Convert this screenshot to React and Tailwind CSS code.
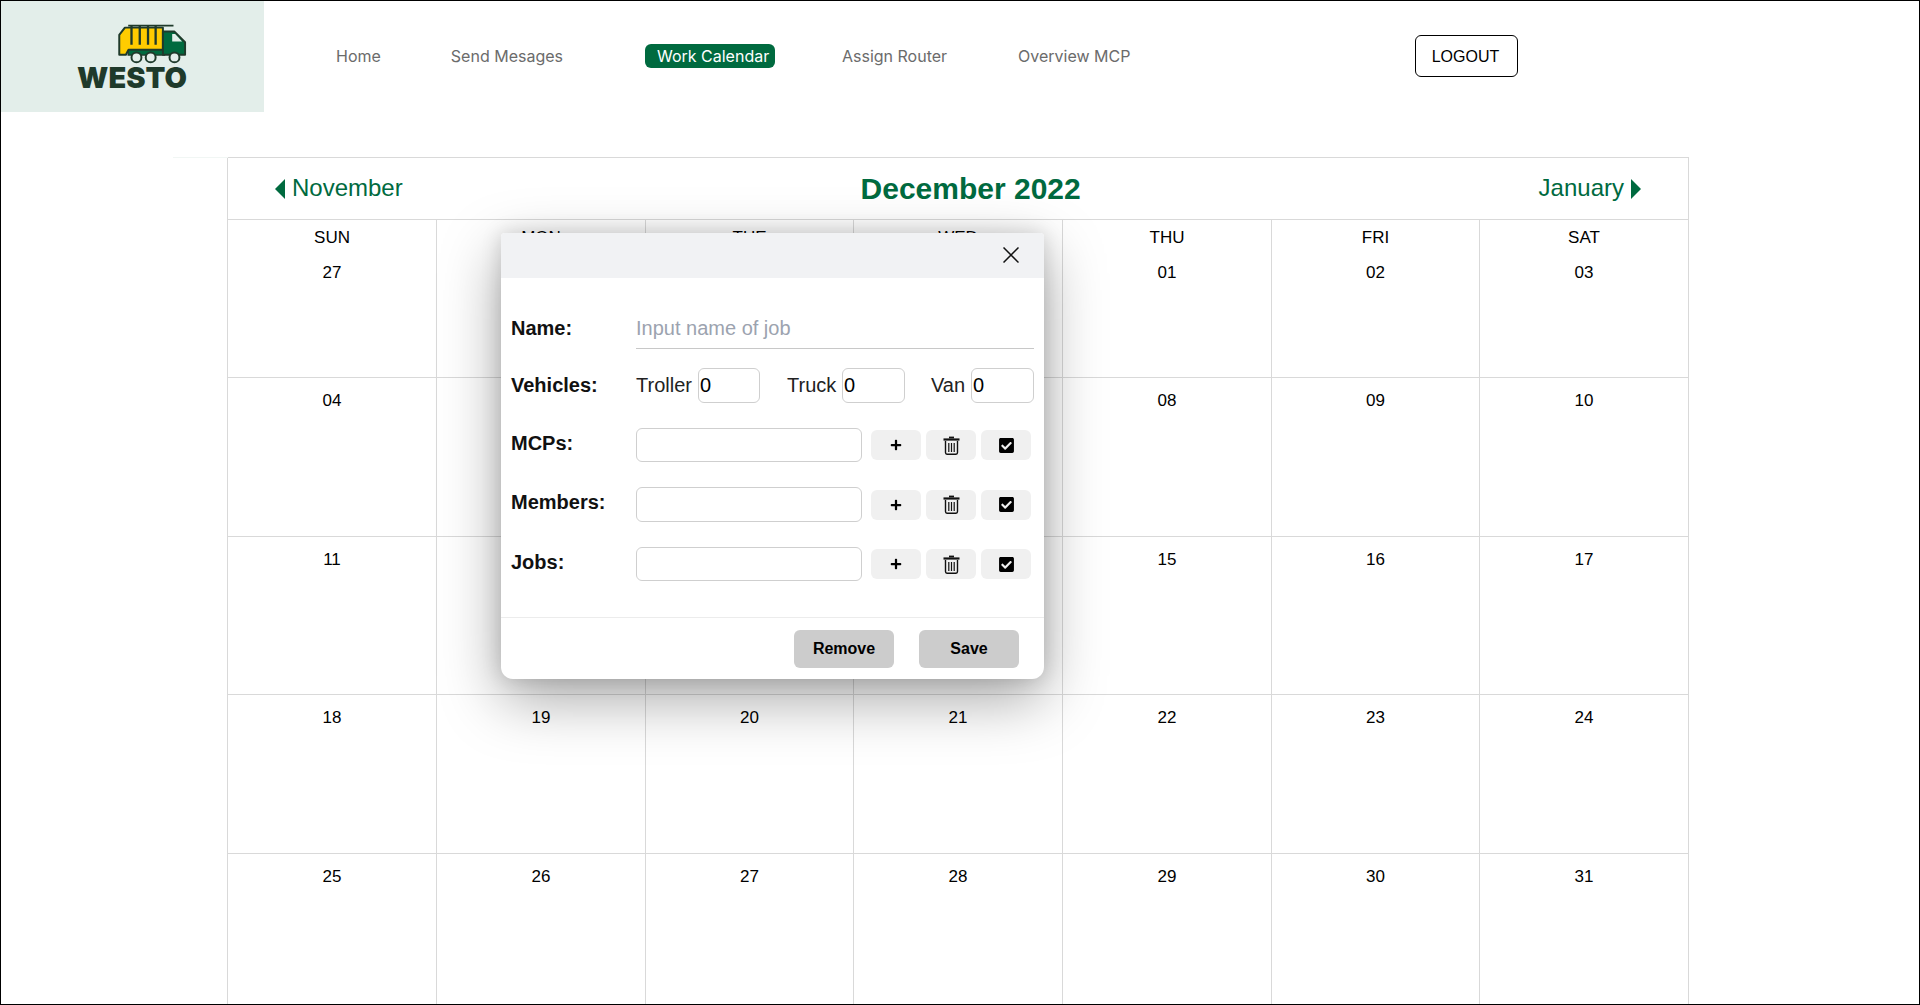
import { FaPlus, FaCheckSquare } from "react-icons/fa";

const WEEKS = [
  ["27", "28", "29", "30", "01", "02", "03"],
  ["04", "05", "06", "07", "08", "09", "10"],
  ["11", "12", "13", "14", "15", "16", "17"],
  ["18", "19", "20", "21", "22", "23", "24"],
  ["25", "26", "27", "28", "29", "30", "31"],
];
const DAYS = ["SUN", "MON", "TUE", "WED", "THU", "FRI", "SAT"];
const ROW_HEIGHTS = ["h-[158px]", "h-[159px]", "h-[158px]", "h-[159px]", "h-[160px]"];

function TruckLogo() {
  return (
    <svg viewBox="352 64 210 124" className="w-[70px] h-[41px] block">
      <path d="M385 72H522" stroke="#1f3a2b" strokeWidth="5" fill="none" />
      <rect x="385" y="143" width="110" height="18" fill="#006a3f" stroke="#1f3a2b" strokeWidth="4" />
      <path d="M375 78H490V145H386L378 160H358V100Z" fill="#ffcc00" stroke="#1f3a2b" strokeWidth="6" strokeLinejoin="round" />
      <path d="M395 70V130M420 70V130M445 70V130M468 70V130" stroke="#1f3a2b" strokeWidth="7" fill="none" />
      <path d="M490 90H525L557 122V160H490Z" fill="#006a3f" stroke="#1f3a2b" strokeWidth="6" strokeLinejoin="round" />
      <path d="M518 97H527L548 120H518Z" fill="#e3eeea" />
      <circle cx="410" cy="168" r="15" fill="#e3eeea" stroke="#1f3a2b" strokeWidth="6" />
      <circle cx="453" cy="168" r="15" fill="#e3eeea" stroke="#1f3a2b" strokeWidth="6" />
      <circle cx="525" cy="168" r="15" fill="#e3eeea" stroke="#1f3a2b" strokeWidth="6" />
    </svg>
  );
}

function Caret({ right }) {
  return (
    <svg viewBox="0 0 10 20" className="w-[10px] h-[20px]">
      <polygon points={right ? "0,0 10,10 0,20" : "10,0 0,10 10,20"} fill="#006a3f" />
    </svg>
  );
}

function TrashIcon() {
  return (
    <svg viewBox="0 0 17 19" className="w-[17px] h-[19px]" fill="none" stroke="#111" strokeWidth="1.4">
      <path d="M6 1.5H11" strokeWidth="1.8" />
      <path d="M0.5 3.5H16.5" strokeWidth="2.2" />
      <path d="M2.5 5V16.5C2.5 17.5 3.2 18.2 4 18.2H13C13.8 18.2 14.5 17.5 14.5 16.5V5" />
      <path d="M5.8 7V16M8.5 7V16M11.2 7V16" strokeWidth="1.2" />
    </svg>
  );
}

function ListRow({ label, inputH, labelClass }) {
  return (
    <div className="flex items-center mt-[25px]">
      <span className={`w-[125px] font-bold text-[20px] text-[#111] ${labelClass}`}>{label}</span>
      <input className={`w-[226px] ${inputH} border border-[#cfcfcf] rounded-md outline-none`} />
      <div className="flex gap-[5px] ml-[9px]">
        <button className="w-[50px] h-[30px] bg-[#f0f0f0] rounded-md flex items-center justify-center">
          <FaPlus className="text-[12px] text-black" />
        </button>
        <button className="w-[50px] h-[30px] bg-[#f0f0f0] rounded-md flex items-center justify-center">
          <TrashIcon />
        </button>
        <button className="w-[50px] h-[30px] bg-[#f0f0f0] rounded-md flex items-center justify-center">
          <FaCheckSquare className="text-[17px] text-black" />
        </button>
      </div>
    </div>
  );
}

function Modal() {
  return (
    <div className="absolute left-[500px] top-[232px] w-[543px] h-[446px] bg-white rounded-t-sm rounded-b-xl overflow-hidden shadow-[0_20px_60px_rgba(0,0,0,0.35),0_0_20px_rgba(0,0,0,0.15)] flex flex-col">
      <div className="h-[45px] bg-[#f1f2f4] flex items-center justify-end pr-[25px]">
        <svg viewBox="0 0 16 16" className="w-[16px] h-[16px] mb-[1px]" stroke="#111" strokeWidth="1.5">
          <path d="M0.5 0.5L15.5 15.5M15.5 0.5L0.5 15.5" />
        </svg>
      </div>
      <div className="flex-1 pl-[10px] pr-[10px] pt-[32px]">
        <div className="flex items-center">
          <span className="w-[125px] font-bold text-[20px] text-[#111] mb-[4px]">Name:</span>
          <input
            placeholder="Input name of job"
            className="flex-1 h-[39px] border-b border-[#c8c8c8] pb-[2px] text-[20px] outline-none placeholder:text-[#9ca3af]"
          />
        </div>
        <div className="flex items-center mt-[19px]">
          <span className="w-[125px] font-bold text-[20px] text-[#111] mb-[2px]">Vehicles:</span>
          <span className="text-[20px] text-[#222] w-[62px] mb-[2px]">Troller</span>
          <input defaultValue="0" className="w-[62px] h-[35px] border border-[#cfcfcf] rounded-md pl-[1px] text-[20px] outline-none" />
          <span className="text-[20px] text-[#222] ml-[27px] w-[55px] mb-[2px]">Truck</span>
          <input defaultValue="0" className="w-[63px] h-[35px] border border-[#cfcfcf] rounded-md pl-[1px] text-[20px] outline-none" />
          <span className="text-[20px] text-[#222] ml-[26px] w-[40px] mb-[2px]">Van</span>
          <input defaultValue="0" className="w-[63px] h-[35px] border border-[#cfcfcf] rounded-md pl-[1px] text-[20px] outline-none" />
        </div>
        <ListRow label="MCPs:" inputH="h-[34px]" labelClass="mb-[4px]" />
        <ListRow label="Members:" inputH="h-[35px]" labelClass="mb-[5px]" />
        <ListRow label="Jobs:" inputH="h-[34px]" labelClass="mb-[4px]" />
      </div>
      <div className="h-[62px] border-t border-[#ececec] flex items-center justify-end gap-[25px] pr-[25px] pt-[1px]">
        <button className="w-[100px] h-[38px] bg-[#cccccc] rounded-md font-bold text-[16px] text-black">Remove</button>
        <button className="w-[100px] h-[38px] bg-[#cccccc] rounded-md font-bold text-[16px] text-black">Save</button>
      </div>
    </div>
  );
}

export default function App() {
  return (
    <div className="relative w-full h-[1005px] border border-black bg-white overflow-hidden font-['Liberation_Sans',Arial,sans-serif]">
      <div className="flex items-center h-[111px]">
        <div className="w-[263px] h-[111px] bg-[#e3eeea] flex flex-col items-end pr-[77px] pt-[22px]">
          <TruckLogo />
          <span className="font-['Inter',sans-serif] font-black text-[29px] leading-[29px] text-[#1f3a2b] mt-[-1px]">WESTO</span>
        </div>
        <nav className="flex items-center h-[24px] mb-[1px] font-['Inter',sans-serif] text-[16px] text-[#6b6b6b]">
          <a className="ml-[72px]">Home</a>
          <a className="ml-[70px]">Send Mesages</a>
          <a className="ml-[82px] w-[130px] h-[24px] pl-[12px] bg-[#006a3f] text-white rounded-md leading-[24px]">Work Calendar</a>
          <a className="ml-[67px]">Assign Router</a>
          <a className="ml-[71px]">Overview MCP</a>
        </nav>
        <button className="absolute left-[1414px] top-[34px] w-[103px] h-[42px] border border-black rounded-md pr-[2px] pt-[1px] text-[16px] text-black">LOGOUT</button>
      </div>

      <div className="absolute left-[172px] top-[156px] w-[55px] h-px bg-[#f1f6f4]" />

      <div className="ml-[226px] mt-[45px] w-[1462px]">
        <div className="h-[63px] border border-[#d9d9d9] flex items-center justify-between px-[47px] text-[24px] text-[#006a3f]">
          <div className="flex items-center gap-[7px]">
            <Caret />
            <span className="mb-[2px]">November</span>
          </div>
          <h1 className="font-bold text-[30px]">December 2022</h1>
          <div className="flex items-center gap-[7px]">
            <span className="mb-[2px]">January</span>
            <Caret right />
          </div>
        </div>
        {WEEKS.map((week, w) => (
          <div key={w} className={`grid grid-cols-[209px_209px_208px_209px_209px_208px_209px] border-l border-[#d9d9d9] ${ROW_HEIGHTS[w]} ${w < 4 ? "border-b" : ""}`}>
            {week.map((day, i) => (
              <div key={i} className={`border-r border-[#d9d9d9] flex flex-col items-center text-[17px] leading-[20px] text-black ${w === 0 ? "pt-[8px]" : "pt-[13px]"}`}>
                {w === 0 && <div className="mb-[15px]">{DAYS[i]}</div>}
                <div>{day}</div>
              </div>
            ))}
          </div>
        ))}
      </div>

      <Modal />
    </div>
  );
}
